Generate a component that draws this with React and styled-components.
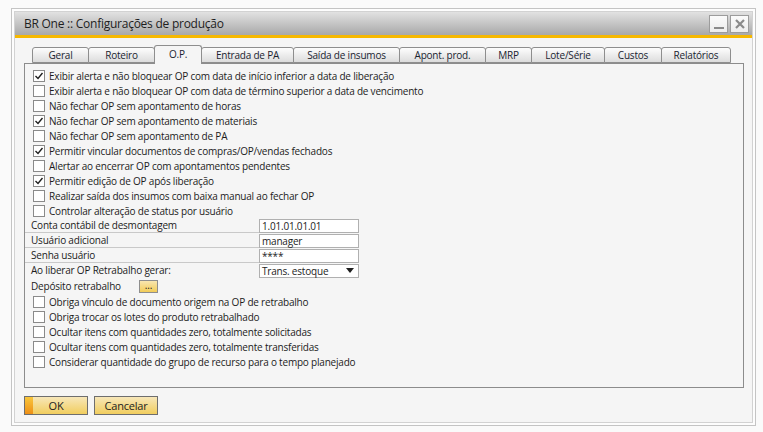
import styled, { createGlobalStyle } from "styled-components";

const GlobalStyle = createGlobalStyle`
  body {
    margin: 0;
    background: #fafafa;
    font-family: "Open Sans", "Noto Sans", sans-serif;
    font-size: 10px;
    letter-spacing: -0.2px;
    color: #1c1c1c;
  }
`;

const TABS = [
  { label: "Geral", width: 57 },
  { label: "Roteiro", width: 67 },
  { label: "O.P.", width: 48, active: true },
  { label: "Entrada de PA", width: 93 },
  { label: "Saída de insumos", width: 107 },
  { label: "Apont. prod.", width: 87 },
  { label: "MRP", width: 47 },
  { label: "Lote/Série", width: 74 },
  { label: "Custos", width: 58 },
  { label: "Relatórios", width: 70 },
];

const TOP_OPTIONS = [
  { label: "Exibir alerta e não bloquear OP com data de início inferior a data de liberação", checked: true },
  { label: "Exibir alerta e não bloquear OP com data de término superior a data de vencimento" },
  { label: "Não fechar OP sem apontamento de horas" },
  { label: "Não fechar OP sem apontamento de materiais", checked: true },
  { label: "Não fechar OP sem apontamento de PA" },
  { label: "Permitir vincular documentos de compras/OP/vendas fechados", checked: true },
  { label: "Alertar ao encerrar OP com apontamentos pendentes" },
  { label: "Permitir edição de OP após liberação", checked: true },
  { label: "Realizar saída dos insumos com baixa manual ao fechar OP" },
  { label: "Controlar alteração de status por usuário" },
];

const FIELDS = [
  { label: "Conta contábil de desmontagem", value: "1.01.01.01.01" },
  { label: "Usuário adicional", value: "manager" },
  { label: "Senha usuário", value: "****" },
  { label: "Ao liberar OP Retrabalho gerar:", value: "Trans. estoque", select: true },
];

const BOTTOM_OPTIONS = [
  "Obriga vínculo de documento origem na OP de retrabalho",
  "Obriga trocar os lotes do produto retrabalhado",
  "Ocultar itens com quantidades zero, totalmente solicitadas",
  "Ocultar itens com quantidades zero, totalmente transferidas",
  "Considerar quantidade do grupo de recurso para o tempo planejado",
];

function Check({ checked, label }) {
  return (
    <CheckRow>
      <Box>
        {checked && (
          <svg width="10" height="10" viewBox="0 0 10 10">
            <path d="M1.5 5 L4 7.5 L8.5 2" fill="none" stroke="#1e1e1e" strokeWidth="1.4" />
          </svg>
        )}
      </Box>
      <span>{label}</span>
    </CheckRow>
  );
}

export default function App() {
  return (
    <>
      <GlobalStyle />
      <Window>
        <Frame>
          <TitleBar>
            <Title>BR One :: Configurações de produção</Title>
            <WinButtons>
              <WinButton>
                <svg width="12" height="12" viewBox="0 0 12 12">
                  <rect x="1" y="9" width="10" height="2" fill="#8a8a8a" />
                </svg>
              </WinButton>
              <WinButton>
                <svg width="12" height="12" viewBox="0 0 12 12">
                  <path d="M2 2 L10 10 M10 2 L2 10" stroke="#8a8a8a" strokeWidth="2.2" />
                </svg>
              </WinButton>
            </WinButtons>
          </TitleBar>

          <Body>
            <TabStrip>
              {TABS.map((t) => (
                <Tab key={t.label} $width={t.width} $active={t.active}>
                  {t.label}
                </Tab>
              ))}
            </TabStrip>

            <Panel>
              {TOP_OPTIONS.map((o) => (
                <Check key={o.label} label={o.label} checked={o.checked} />
              ))}

              {FIELDS.map((f) => (
                <FieldRow key={f.label}>
                  <FieldLabel $line={!f.select}>{f.label}</FieldLabel>
                  <Input>
                    {f.value}
                    {f.select && (
                      <Arrow>
                        <svg width="8" height="5" viewBox="0 0 8 5">
                          <path d="M0 0 H8 L4 5 Z" fill="#1e1e1e" />
                        </svg>
                      </Arrow>
                    )}
                  </Input>
                </FieldRow>
              ))}

              <DepositRow>
                <span>Depósito retrabalho</span>
                <DotsButton>...</DotsButton>
              </DepositRow>

              {BOTTOM_OPTIONS.map((label) => (
                <Check key={label} label={label} />
              ))}
            </Panel>

            <Actions>
              <Button $default>OK</Button>
              <Button>Cancelar</Button>
            </Actions>
          </Body>
        </Frame>
      </Window>
    </>
  );
}

const Window = styled.div`
  margin: 8px 0 0 11px;
  width: 745px;
  height: 418px;
  box-sizing: border-box;
  border: 1px solid #c4c4c4;
  padding: 2px;
  background: #fdfdfd;
`;

const Frame = styled.div`
  height: 100%;
  box-sizing: border-box;
  border: 1px solid #d2d2d2;
  background: #f5f5f5;
  display: flex;
  flex-direction: column;
`;

const TitleBar = styled.div`
  height: 23px;
  display: flex;
  align-items: center;
  justify-content: space-between;
  padding: 0 3px 0 9px;
  background: linear-gradient(#e2e2e2, #a8a8a8);
  border-bottom: 3px solid #f6b800;
`;

const Title = styled.div`
  font-size: 12px;
  letter-spacing: -0.25px;
  color: #1e1e1e;
`;

const WinButtons = styled.div`
  display: flex;
  gap: 2px;
`;

const WinButton = styled.div`
  width: 19px;
  height: 18px;
  box-sizing: border-box;
  border: 1px solid #9c9c9c;
  background: linear-gradient(#fbfbfb, #ececec);
  display: flex;
  align-items: center;
  justify-content: center;
`;

const Body = styled.div`
  padding: 7px 8px 0 9px;
`;

const TabStrip = styled.div`
  display: flex;
  align-items: flex-end;
  height: 18px;
  padding-left: 9px;
`;

const Tab = styled.div`
  width: ${(p) => p.$width}px;
  height: ${(p) => (p.$active ? 19 : 16)}px;
  box-sizing: border-box;
  margin-left: -1px;
  margin-bottom: ${(p) => (p.$active ? -1 : 0)}px;
  position: relative;
  z-index: ${(p) => (p.$active ? 1 : 0)};
  display: flex;
  align-items: center;
  justify-content: center;
  border: 1px solid #8e8e8e;
  border-bottom: ${(p) => (p.$active ? "none" : "1px solid #8e8e8e")};
  border-radius: 3px 3px 0 0;
  background: ${(p) => (p.$active ? "#f5f5f5" : "linear-gradient(#fdfdfd, #dcdcdc)")};
  color: #1a2430;
  padding-bottom: ${(p) => (p.$active ? 2 : 0)}px;
`;

const Panel = styled.div`
  height: 325px;
  box-sizing: border-box;
  border: 1px solid #8c8c8c;
  padding-top: 4px;
  display: flex;
  flex-direction: column;
`;

const CheckRow = styled.div`
  height: 15px;
  display: flex;
  align-items: center;
  gap: 4px;
  padding-left: 8px;
  white-space: nowrap;
`;

const Box = styled.div`
  width: 12px;
  height: 12px;
  box-sizing: border-box;
  border: 1px solid #8a8a8a;
  background: #fff;
  display: flex;
  align-items: center;
  justify-content: center;
`;

const FieldRow = styled.div`
  height: 15px;
  display: flex;
  align-items: center;
`;

const FieldLabel = styled.div`
  width: 234px;
  height: 15px;
  box-sizing: border-box;
  padding-left: 6px;
  display: flex;
  align-items: center;
  border-bottom: 1px solid ${(p) => (p.$line ? "#c9c9c9" : "transparent")};
`;

const Input = styled.div`
  width: 100px;
  height: 14px;
  box-sizing: border-box;
  border: 1px solid #b0b0b0;
  background: #fff;
  padding-left: 2px;
  display: flex;
  align-items: center;
  justify-content: space-between;
`;

const Arrow = styled.span`
  display: flex;
  padding-right: 4px;
`;

const DepositRow = styled.div`
  height: 16px;
  display: grid;
  grid-template-columns: 108px 19px;
  align-items: center;
  padding-left: 6px;
`;

const DotsButton = styled.div`
  height: 13px;
  box-sizing: border-box;
  border: 1px solid #8e8e8e;
  background: linear-gradient(#f8e6b0, #f2cc58);
  display: flex;
  align-items: center;
  justify-content: center;
  font-size: 10px;
  line-height: 1;
  padding-bottom: 3px;
`;

const Actions = styled.div`
  display: flex;
  gap: 6px;
  margin-top: 8px;
`;

const Button = styled.div`
  width: 64px;
  height: 19px;
  box-sizing: border-box;
  border: 1px solid #6e6e6e;
  background: ${(p) =>
    p.$default
      ? "linear-gradient(#f9c73c, #ee8f16) left / 8px 100% no-repeat, linear-gradient(#f7e7b9, #f1cd5e)"
      : "linear-gradient(#f7e7b9, #f1cd5e)"};
  display: flex;
  align-items: center;
  justify-content: center;
  color: #222;
  font-size: 11px;
`;
